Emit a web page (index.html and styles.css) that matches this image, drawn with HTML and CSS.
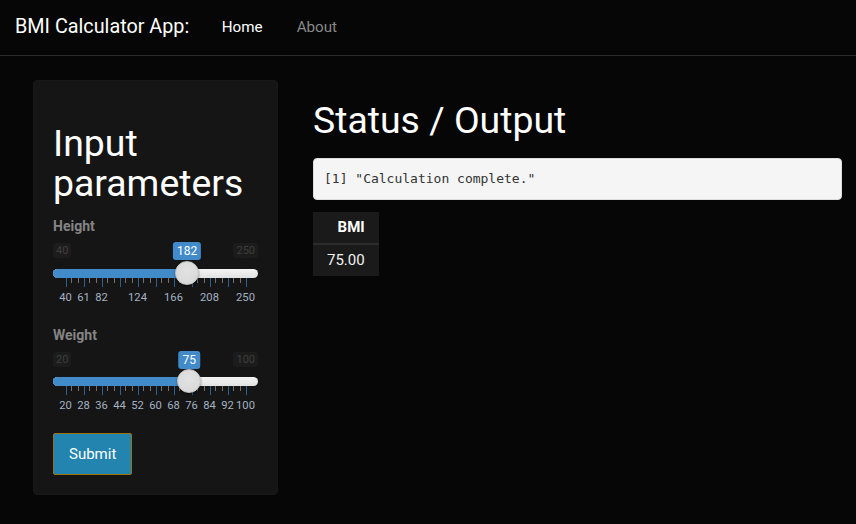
FILE: index.html
```html
<!DOCTYPE html>
<html lang="en">
<head>
<meta charset="utf-8">
<title>BMI Calculator App</title>
<link rel="stylesheet" href="styles.css">
</head>
<body>
<nav class="navbar">
  <span class="brand">BMI Calculator App:</span>
  <a class="nav-link active" href="#">Home</a>
  <a class="nav-link" href="#">About</a>
</nav>
<div class="main">
  <aside class="well">
    <h2 class="panel-title">Input parameters</h2>
    <div class="form-group">
      <label class="control-label">Height</label>
      <div class="slider">
        <div class="irs-top"><span class="irs-min">40</span><span class="irs-max">250</span></div>
        <div class="irs-line"><div class="irs-bar" style="width:67.6%"></div></div>
        <div class="irs-grid">
          <div class="scale">
            <span class="tick major" style="left:0%"></span><span class="tick" style="left:3.33%"></span><span class="tick" style="left:6.67%"></span>
            <span class="tick major" style="left:10%"></span><span class="tick" style="left:13.33%"></span><span class="tick" style="left:16.67%"></span>
            <span class="tick major" style="left:20%"></span><span class="tick" style="left:23.33%"></span><span class="tick" style="left:26.67%"></span>
            <span class="tick major" style="left:30%"></span><span class="tick" style="left:33.33%"></span><span class="tick" style="left:36.67%"></span>
            <span class="tick major" style="left:40%"></span><span class="tick" style="left:43.33%"></span><span class="tick" style="left:46.67%"></span>
            <span class="tick major" style="left:50%"></span><span class="tick" style="left:53.33%"></span><span class="tick" style="left:56.67%"></span>
            <span class="tick major" style="left:60%"></span><span class="tick" style="left:63.33%"></span><span class="tick" style="left:66.67%"></span>
            <span class="tick major" style="left:70%"></span><span class="tick" style="left:73.33%"></span><span class="tick" style="left:76.67%"></span>
            <span class="tick major" style="left:80%"></span><span class="tick" style="left:83.33%"></span><span class="tick" style="left:86.67%"></span>
            <span class="tick major" style="left:90%"></span><span class="tick" style="left:93.33%"></span><span class="tick" style="left:96.67%"></span>
            <span class="tick major" style="left:100%"></span>
            <span class="grid-text" style="left:0%">40</span>
            <span class="grid-text" style="left:10%">61</span>
            <span class="grid-text" style="left:20%">82</span>
            <span class="grid-text" style="left:40%">124</span>
            <span class="grid-text" style="left:60%">166</span>
            <span class="grid-text" style="left:80%">208</span>
            <span class="grid-text" style="left:100%">250</span>
          </div>
        </div>
        <div class="overlay">
          <span class="irs-single" style="left:67.62%">182</span>
          <span class="irs-handle" style="left:67.62%"></span>
        </div>
      </div>
    </div>
    <div class="form-group">
      <label class="control-label">Weight</label>
      <div class="slider">
        <div class="irs-top"><span class="irs-min">20</span><span class="irs-max">100</span></div>
        <div class="irs-line"><div class="irs-bar" style="width:68.75%"></div></div>
        <div class="irs-grid">
          <div class="scale">
            <span class="tick major" style="left:0%"></span><span class="tick" style="left:3.33%"></span><span class="tick" style="left:6.67%"></span>
            <span class="tick major" style="left:10%"></span><span class="tick" style="left:13.33%"></span><span class="tick" style="left:16.67%"></span>
            <span class="tick major" style="left:20%"></span><span class="tick" style="left:23.33%"></span><span class="tick" style="left:26.67%"></span>
            <span class="tick major" style="left:30%"></span><span class="tick" style="left:33.33%"></span><span class="tick" style="left:36.67%"></span>
            <span class="tick major" style="left:40%"></span><span class="tick" style="left:43.33%"></span><span class="tick" style="left:46.67%"></span>
            <span class="tick major" style="left:50%"></span><span class="tick" style="left:53.33%"></span><span class="tick" style="left:56.67%"></span>
            <span class="tick major" style="left:60%"></span><span class="tick" style="left:63.33%"></span><span class="tick" style="left:66.67%"></span>
            <span class="tick major" style="left:70%"></span><span class="tick" style="left:73.33%"></span><span class="tick" style="left:76.67%"></span>
            <span class="tick major" style="left:80%"></span><span class="tick" style="left:83.33%"></span><span class="tick" style="left:86.67%"></span>
            <span class="tick major" style="left:90%"></span><span class="tick" style="left:93.33%"></span><span class="tick" style="left:96.67%"></span>
            <span class="tick major" style="left:100%"></span>
            <span class="grid-text" style="left:0%">20</span>
            <span class="grid-text" style="left:10%">28</span>
            <span class="grid-text" style="left:20%">36</span>
            <span class="grid-text" style="left:30%">44</span>
            <span class="grid-text" style="left:40%">52</span>
            <span class="grid-text" style="left:50%">60</span>
            <span class="grid-text" style="left:60%">68</span>
            <span class="grid-text" style="left:70%">76</span>
            <span class="grid-text" style="left:80%">84</span>
            <span class="grid-text" style="left:90%">92</span>
            <span class="grid-text" style="left:100%">100</span>
          </div>
        </div>
        <div class="overlay">
          <span class="irs-single" style="left:68.75%">75</span>
          <span class="irs-handle" style="left:68.75%"></span>
        </div>
      </div>
    </div>
    <button class="btn-submit" type="button">Submit</button>
  </aside>
  <section class="content">
    <h2 class="page-title">Status / Output</h2>
    <pre class="output">[1] "Calculation complete."</pre>
    <table class="result-table">
      <thead><tr><th>BMI</th></tr></thead>
      <tbody><tr><td>75.00</td></tr></tbody>
    </table>
  </section>
</div>
</body>
</html>
```

FILE: styles.css
```css
html, body {
  margin: 0;
  padding: 0;
}

body {
  background: #060606;
  color: #ffffff;
  font-family: Roboto, "Liberation Sans", sans-serif;
  font-size: 14px;
  line-height: 1.43;
}

.navbar {
  display: flex;
  align-items: center;
  height: 55px;
  padding-left: 15px;
  border-bottom: 1px solid #2a2a2a;
}

.brand {
  font-size: 19.8px;
  color: #ffffff;
  margin-right: 15.5px;
}

.nav-link {
  font-size: 15.2px;
  color: #888888;
  text-decoration: none;
  padding: 0 17px;
}

.nav-link.active {
  color: #ffffff;
}

.main {
  display: flex;
  gap: 35px;
  padding: 24px 14px 0 33px;
}

.well {
  width: 245px;
  box-sizing: border-box;
  flex: none;
  display: flex;
  flex-direction: column;
  padding: 19px;
  background: #151515;
  border: 1px solid #181818;
  border-radius: 4px;
}

.panel-title {
  font-size: 37.4px;
  font-weight: 400;
  line-height: 39.6px;
  margin: 24px 0 13px;
}

.form-group {
  margin-bottom: 19.5px;
}

.control-label {
  display: block;
  font-size: 14px;
  font-weight: 700;
  line-height: 20px;
  color: #848484;
  margin-bottom: 5px;
}

.slider {
  position: relative;
}

.irs-top {
  display: flex;
  justify-content: space-between;
  padding-top: 2px;
}

.irs-min,
.irs-max {
  font-size: 11px;
  line-height: 13px;
  padding: 1px 3px;
  background: #1c1c1c;
  color: #3e3e3e;
  border-radius: 3px;
}

.irs-line {
  margin-top: 10.5px;
  height: 9px;
  border-radius: 5px;
  background: linear-gradient(#f4f4f4, #e2e2e2);
  overflow: hidden;
}

.irs-bar {
  height: 100%;
  background: #428bca;
}

.irs-grid {
  height: 27.5px;
  padding: 0 12.5px;
}

.scale {
  position: relative;
  height: 100%;
}

.tick {
  position: absolute;
  top: 0;
  width: 1px;
  height: 5px;
  background: #717171;
}

.tick.major {
  height: 9px;
  background: #2c6194;
}

.grid-text {
  position: absolute;
  top: 13px;
  font-size: 11.2px;
  line-height: 13px;
  color: #a3b2c3;
  transform: translateX(-50%);
  white-space: nowrap;
}

.overlay {
  position: absolute;
  top: 0;
  left: 12.5px;
  right: 12.5px;
  height: 50px;
}

.irs-single {
  position: absolute;
  top: 1px;
  transform: translateX(-50%);
  font-size: 12px;
  line-height: 16px;
  padding: 1px 4px;
  background: #428bca;
  color: #ffffff;
  border-radius: 3px;
}

.irs-handle {
  position: absolute;
  top: 19.5px;
  width: 24px;
  height: 24px;
  box-sizing: border-box;
  margin-left: -12px;
  border-radius: 50%;
  background: radial-gradient(circle at 50% 40%, #e2e2e2, #d6d6d6);
  border: 1px solid #c4c4c4;
  box-shadow: 0 1px 2px rgba(0, 0, 0, 0.5);
}

.btn-submit {
  align-self: flex-start;
  font-family: Roboto, "Liberation Sans", sans-serif;
  font-size: 15px;
  line-height: 20px;
  padding: 10px 15px;
  color: #ffffff;
  background: #2384b0;
  border: 1px solid #9a730f;
  border-radius: 2px;
}

.content {
  flex: 1;
  min-width: 0;
}

.page-title {
  font-size: 37.4px;
  font-weight: 400;
  line-height: 39.6px;
  margin: 21px 0 17px;
}

.output {
  margin: 0 0 12px;
  padding: 11px 11px 11px 10px;
  font-family: "DejaVu Sans Mono", "Liberation Mono", monospace;
  font-size: 13px;
  line-height: 18px;
  color: #333333;
  background: #f5f5f5;
  border: 1px solid #dcdcdc;
  border-radius: 4px;
}

.result-table {
  border-collapse: collapse;
  background: #1a1a1a;
}

.result-table th,
.result-table td {
  font-size: 15px;
  line-height: 21px;
  padding: 5px 14px;
  text-align: right;
}

.result-table th {
  font-weight: 700;
  border-bottom: 2px solid #2c2c2c;
}

.result-table td {
  color: #f2f2f2;
}
```
